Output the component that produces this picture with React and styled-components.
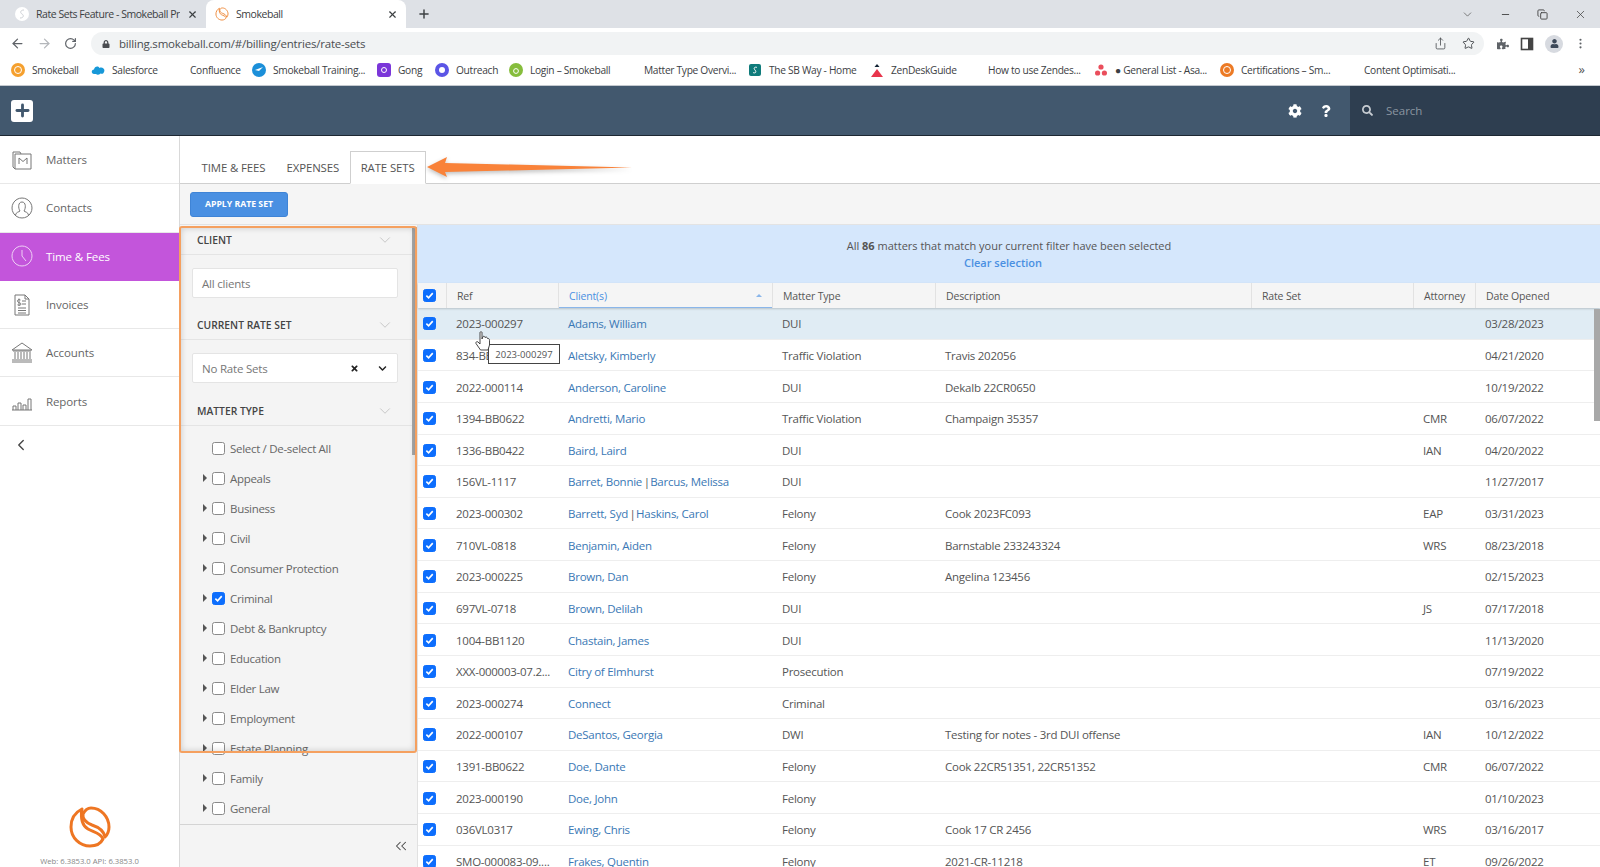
import React from 'react';
import styled, { createGlobalStyle } from 'styled-components';
import { FaCog, FaQuestion, FaSearch, FaTimes, FaChevronDown, FaLock, FaPuzzlePiece, FaUser } from 'react-icons/fa';
import { ArrowLeft, ArrowRight, RotateCw, Plus, X, ChevronDown, Minus, Copy, Star, Share, ChevronLeft, ChevronsLeft, EllipsisVertical } from 'lucide-react';

const GlobalStyle = createGlobalStyle`
  html, body { margin: 0; padding: 0; height: 100%; overflow: hidden; background: #fff; }
  * { box-sizing: border-box; }
  body { font-family: "Open Sans", "Noto Sans", sans-serif; color: #555; }
`;

const Page = styled.div`
  position: relative;
  width: 1600px;
  height: 867px;
  overflow: hidden;
  display: flex;
  flex-direction: column;
`;

/* browser chrome */
const TabStrip = styled.div`
  height: 28px;
  flex: none;
  background: #dee1e6;
  display: flex;
  align-items: flex-end;
  padding-left: 8px;
  color: #3c4043;
`;
const BrowserTab = styled.div`
  width: ${p => p.$w}px;
  height: 28px;
  display: flex;
  align-items: center;
  gap: 7px;
  padding: 0 8px 0 ${p => (p.$active ? 9 : 7)}px;
  font-size: 10.5px;
  letter-spacing: -0.45px;
  white-space: nowrap;
  background: ${p => (p.$active ? '#fff' : 'transparent')};
  border-radius: 8px 8px 0 0;
`;
const TabTitle = styled.span`
  flex: 1;
  overflow: hidden;
`;
const NewTab = styled.div`
  margin-left: 11px;
  height: 28px;
  display: flex;
  align-items: center;
`;
const WindowControls = styled.div`
  margin-left: auto;
  height: 28px;
  display: flex;
  align-items: center;
  gap: 26px;
  padding-right: 13px;
  color: #444;
`;
const AddressRow = styled.div`
  height: 28px;
  flex: none;
  background: #fff;
  display: flex;
  align-items: center;
  padding: 3px 12px 0 10px;
  color: #5f6368;
`;
const NavIcons = styled.div`
  width: 81px;
  display: flex;
  align-items: center;
  gap: 12px;
`;
const Omnibox = styled.div`
  width: 1393px;
  height: 23px;
  background: #f1f3f4;
  border-radius: 12px;
  display: flex;
  align-items: center;
  padding: 0 9px 0 11px;
  gap: 9px;
  font-size: 11.5px;
  letter-spacing: -0.2px;
  color: #4a4d51;
`;
const Url = styled.span`
  flex: 1;
`;
const FavStar = styled(Star)`
  margin-left: 6px;
`;
const ToolIcons = styled.div`
  display: flex;
  align-items: center;
  margin-left: 13px;
  gap: 11px;
`;
const Avatar = styled.div`
  width: 18px;
  height: 18px;
  border-radius: 50%;
  background: #d7dae0;
  display: flex;
  align-items: center;
  justify-content: center;
  color: #3c4858;
`;
const BookmarkBar = styled.div`
  height: 30px;
  flex: none;
  background: #fff;
  border-bottom: 1px solid #c4c9cf;
  display: flex;
  align-items: center;
  padding: 0 0 2px 11px;
  gap: 13px;
  font-size: 10.2px;
  letter-spacing: -0.3px;
  color: #3c4043;
`;
const Bookmark = styled.div`
  width: ${p => p.$w}px;
  display: flex;
  align-items: center;
  gap: 7px;
  white-space: nowrap;
  flex: none;
`;
const BookmarkIcon = styled.span`
  width: 14px;
  height: 14px;
  flex: none;
  display: block;
`;
const MoreBookmarks = styled.div`
  position: absolute;
  right: 15px;
  top: 60px;
  font-size: 13px;
  color: #555;
`;

/* app header */
const Header = styled.header`
  height: 50px;
  flex: none;
  background: #42586e;
  border-bottom: 1px solid #1d2732;
  display: flex;
  align-items: center;
  padding-left: 11px;
`;
const AddButton = styled.div`
  width: 22px;
  height: 22px;
  background: #fff;
  border-radius: 3px;
  color: #42586e;
  display: flex;
  align-items: center;
  justify-content: center;
`;
const HeaderActions = styled.div`
  margin-left: auto;
  width: 62px;
  display: flex;
  align-items: center;
  gap: 18px;
  color: #fff;
`;
const SearchBox = styled.div`
  width: 250px;
  height: 49px;
  background: #2e3e50;
  display: flex;
  align-items: center;
  gap: 11px;
  padding: 0 0 0 12px;
  color: #c7ccd2;
  font-size: 11.5px;
  span { color: #8b95a0; margin-left: 2px; }
`;

/* main */
const Main = styled.div`
  flex: 1;
  display: flex;
  min-height: 0;
`;
const Sidebar = styled.nav`
  width: 180px;
  flex: none;
  background: #fff;
  border-right: 1px solid #d9d9d9;
  display: flex;
  flex-direction: column;
`;
const NavItem = styled.div`
  height: 48.3px;
  flex: none;
  display: flex;
  align-items: center;
  gap: 13px;
  padding-left: 11px;
  font-size: 11.5px;
  letter-spacing: -0.1px;
  color: ${p => (p.$active ? '#fff' : '#666')};
  background: ${p => (p.$active ? '#c355db' : '#fff')};
  border-bottom: 1px solid ${p => (p.$active ? '#c355db' : '#e8e8e8')};
`;
const NavIcon = styled.svg`
  width: 22px;
  height: 22px;
  flex: none;
  fill: none;
  stroke: ${p => (p.$active ? '#eed0f5' : '#777')};
  stroke-width: 1;
`;
const CollapseNav = styled.div`
  height: 38px;
  flex: none;
  display: flex;
  align-items: center;
  padding-left: 12px;
  color: #444;
`;
const SideFooter = styled.div`
  margin-top: auto;
  display: flex;
  flex-direction: column;
  align-items: center;
  gap: 7px;
  height: 62px;
  font-size: 7.7px;
  color: #888;
  white-space: nowrap;
`;

const Content = styled.div`
  flex: 1;
  min-width: 0;
  display: flex;
  flex-direction: column;
  background: #f5f5f5;
`;
const TabsRow = styled.div`
  height: 48px;
  flex: none;
  background: #fff;
  border-bottom: 1px solid #cfcfcf;
  display: flex;
  align-items: flex-end;
  padding-left: 11px;
  font-size: 11.4px;
  letter-spacing: -0.1px;
  color: #555;
`;
const MainTab = styled.div`
  height: 32px;
  padding: 0 10.5px;
  display: flex;
  align-items: center;
  ${p => p.$active && `
    background: #fff;
    border: 1px solid #cfcfcf;
    border-bottom: 1px solid #fff;
    margin-bottom: -1px;
    height: 33px;
    padding: 0 10px;
  `}
`;
const Toolbar = styled.div`
  height: 41px;
  flex: none;
  padding-left: 10px;
  display: flex;
  align-items: center;
  border-bottom: 1px solid #e3e3e3;
`;
const PrimaryButton = styled.button`
  width: 98px;
  height: 25px;
  border: 1px solid #3f84d6;
  border-radius: 3px;
  background: #4a90e2;
  color: #fff;
  font: 700 8.7px "Open Sans", sans-serif;
  padding: 0;
`;
const Body = styled.div`
  flex: 1;
  display: flex;
  min-height: 0;
`;

/* filter panel */
const FilterPanel = styled.aside`
  position: relative;
  width: 238px;
  flex: none;
  background: #f4f4f4;
  border-right: 1px solid #e1e1e1;
  display: flex;
  flex-direction: column;
`;
const PanelThumb = styled.div`
  position: absolute;
  top: 2px;
  right: 0;
  width: 5px;
  height: 228px;
  background: #a8a8a8;
`;
const SectionHeader = styled.div`
  height: 30px;
  flex: none;
  display: flex;
  align-items: center;
  justify-content: space-between;
  padding: 0 23px 0 17px;
  border-bottom: 1px solid #e4e4e4;
  font-size: 10.3px;
  font-weight: 600;
  color: #444;
`;
const Field = styled.div`
  height: 30px;
  flex: none;
  margin: ${p => p.$m};
  background: #fff;
  border: 1px solid #e4e4e4;
  border-radius: 2px;
  display: flex;
  align-items: center;
  padding: 0 10px 0 9px;
  font-size: 11.5px;
  letter-spacing: -0.2px;
  color: #777;
`;
const FieldIcons = styled.span`
  margin-left: auto;
  display: flex;
  align-items: center;
  gap: 19px;
  color: #222;
`;
const TypeList = styled.div`
  flex: 1;
  min-height: 0;
  overflow: hidden;
  padding-top: 7px;
`;
const TypeItem = styled.div`
  height: 30px;
  display: flex;
  align-items: center;
  padding-left: ${p => (p.$caret ? '23px' : '32px')};
  font-size: 11.5px;
  letter-spacing: -0.3px;
  color: #666;
`;
const Caret = styled.span`
  width: 0;
  height: 0;
  margin-right: 5px;
  border-left: 4px solid #555;
  border-top: 4px solid transparent;
  border-bottom: 4px solid transparent;
`;
const TypeLabel = styled.span`
  margin-left: 5px;
`;
const PanelFooter = styled.div`
  height: 43px;
  flex: none;
  border-top: 1px solid #d4d4d4;
  display: flex;
  align-items: center;
  justify-content: flex-end;
  padding-right: 7px;
  color: #444;
`;

/* checkbox */
const Box = styled.span`
  width: 13px;
  height: 13px;
  flex: none;
  display: inline-flex;
  align-items: center;
  justify-content: center;
  border-radius: 2.5px;
  background: ${p => (p.$on ? '#0d6efd' : '#fff')};
  border: 1px solid ${p => (p.$on ? '#0d6efd' : '#8a8a8a')};
`;
const Checkbox = ({ on }) => (
  <Box $on={on}>
    {on && (
      <svg width="9" height="9" viewBox="0 0 10 10">
        <path d="M1.5 5.2 L4 7.6 L8.6 2.4" fill="none" stroke="#fff" strokeWidth="1.8" />
      </svg>
    )}
  </Box>
);

/* table */
const TablePane = styled.section`
  position: relative;
  flex: 1;
  min-width: 0;
  display: flex;
  flex-direction: column;
  background: #fff;
`;
const Banner = styled.div`
  height: 58px;
  flex: none;
  background: #d5e7fc;
  display: flex;
  flex-direction: column;
  align-items: center;
  justify-content: center;
  gap: 2px;
  font-size: 11px;
  line-height: 15px;
  color: #555;
  b { font-weight: 700; }
`;
const ClearLink = styled.a`
  color: #4a90e2;
  font-weight: 600;
  margin-right: 12px;
`;
const columns = '28px 112px 214px 163px 316px 162px 62px 1fr';
const HeadRow = styled.div`
  height: 25px;
  flex: none;
  display: grid;
  grid-template-columns: ${columns};
  background: #f5f5f5;
  box-shadow: 0 1px 2px rgba(0, 0, 0, 0.18);
  position: relative;
  font-size: 10.5px;
  letter-spacing: -0.15px;
  color: #555;
`;
const HeadCell = styled.div`
  display: flex;
  align-items: center;
  justify-content: space-between;
  padding: 0 10px;
  border-left: 1px solid #e2e2e2;
  color: ${p => (p.$sorted ? '#4a90e2' : '#555')};
  ${p => p.$sorted && 'box-shadow: inset 0 -1px 0 #8ab6ea;'}
`;
const SortMark = styled.span`
  width: 0;
  height: 0;
  border-left: 3px solid transparent;
  border-right: 3px solid transparent;
  border-bottom: 3px solid #8ab6ea;
`;
const CheckCell = styled.div`
  display: flex;
  align-items: center;
  justify-content: center;
  padding: ${p => (p.$row ? '1px' : '0')} 5px 0 0;
`;
const Row = styled.div`
  height: 31.63px;
  flex: none;
  display: grid;
  grid-template-columns: ${columns};
  align-items: center;
  border-bottom: 1px solid #eee;
  background: ${p => (p.$hover ? '#e0ecf4' : '#fff')};
  font-size: 11.5px;
  letter-spacing: -0.25px;
  color: #555;
`;
const Cell = styled.div`
  padding: 1px 10px 0;
  white-space: nowrap;
  overflow: hidden;
`;
const ClientCell = styled(Cell)`
  color: #3a78b5;
  span { color: #555; letter-spacing: -1.4px; }
`;
const TableThumb = styled.div`
  position: absolute;
  top: 84px;
  right: 0;
  width: 6px;
  height: 112px;
  background: #a8a8a8;
`;

/* annotations drawn over the page */
const Tooltip = styled.div`
  position: absolute;
  left: 488px;
  top: 344px;
  width: 72px;
  height: 20px;
  background: #fff;
  border: 1px solid #444;
  display: flex;
  align-items: center;
  justify-content: center;
  font-size: 9.5px;
  color: #555;
`;
const HandCursor = styled.svg`
  position: absolute;
  left: 475px;
  top: 331px;
  width: 15px;
  height: 20px;
`;
const OrangeFrame = styled.div`
  position: absolute;
  left: 179px;
  top: 226px;
  width: 238px;
  height: 527px;
  border: 2px solid #f5a05f;
  border-radius: 3px;
  box-shadow: inset 0 0 6px rgba(0, 0, 0, 0.18);
  pointer-events: none;
`;
const Arrow = styled.svg`
  position: absolute;
  left: 425px;
  top: 154px;
  width: 210px;
  height: 28px;
  filter: drop-shadow(0 2px 2px rgba(0, 0, 0, 0.25));
`;

const Favicon = ({ c, children }) => (
  <BookmarkIcon as="svg" viewBox="0 0 14 14">
    {c && <circle cx="7" cy="7" r="7" fill={c} />}
    {children}
  </BookmarkIcon>
);

const SMark = ({ size, color, sw }) => (
  <svg width={size} height={size} viewBox="0 0 44 44" fill="none" stroke={color} strokeWidth={sw} strokeLinejoin="round">
    <path d="M14 4 C6 8 3 15 3 22 C3 33 12 41 22 41 C28 41 33 38 35 34 C33 28 25 27 20 24 C15 21 12 16 14 4z" />
    <path d="M15 9 C17 5 19 3 23 3 C33 3 41 12 41 22 C41 26 39 30 37 32 C36 26 30 22 24 20 C19 18 14 15 15 9z" />
  </svg>
);

const bookmarks = [
  { w: 67, t: 'Smokeball', i: <Favicon c="#f5a02e"><circle cx="7" cy="7" r="3.5" fill="none" stroke="#fff" /></Favicon> },
  { w: 65, t: 'Salesforce', i: <Favicon><path d="M3 11 C0 11 0 6.5 3 6.5 C3.5 3.5 7 2.5 8.5 5 C11.5 3.5 14.5 6.5 13 9 C12.5 11 10.5 11 9.5 10.5 C8 12 6 12 5 11z" fill="#1798d8" /></Favicon> },
  { w: 70, t: 'Confluence', i: <Favicon /> },
  { w: 112, t: 'Smokeball Training...', i: <Favicon c="#1b8fd9"><path d="M3 7 L11 4 L7 8z" fill="#fff" /></Favicon> },
  { w: 45, t: 'Gong', i: <Favicon><rect width="14" height="14" rx="3" fill="#7b36d9" /><circle cx="7" cy="7" r="2.5" fill="none" stroke="#fff" /></Favicon> },
  { w: 61, t: 'Outreach', i: <Favicon c="#5b55e6"><circle cx="7" cy="7" r="3" fill="#fff" /></Favicon> },
  { w: 101, t: 'Login – Smokeball', i: <Favicon c="#86bd3c"><circle cx="7" cy="8" r="2.4" fill="none" stroke="#fff" /></Favicon> },
  { w: 112, t: 'Matter Type Overvi...', i: <Favicon /> },
  { w: 109, t: 'The SB Way - Home', i: <Favicon><rect x="1" y="1" width="12" height="12" rx="2" fill="#0f7b7b" /><path d="M5 9.5 C7 10.5 9 9.5 7 7 C5 5 7 3.5 9 4.5" fill="none" stroke="#fff" /></Favicon> },
  { w: 84, t: 'ZenDeskGuide', i: <Favicon><path d="M7 6 L13 14 H1z" fill="#e8354c" /><path d="M7 1 L9.5 4 H4.5z" fill="#123" /></Favicon> },
  { w: 114, t: 'How to use Zendes...', i: <Favicon /> },
  { w: 113, t: '● General List - Asa...', i: <Favicon><circle cx="7" cy="4" r="2.6" fill="#ea4e5c" /><circle cx="3.6" cy="10" r="2.6" fill="#ea4e5c" /><circle cx="10.4" cy="10" r="2.6" fill="#ea4e5c" /></Favicon> },
  { w: 110, t: 'Certifications – Sm...', i: <Favicon c="#ec7a25"><circle cx="7" cy="7" r="3.5" fill="none" stroke="#fff" /></Favicon> },
  { w: 112, t: 'Content Optimisati...', i: <Favicon /> },
];

const navItems = [
  { t: 'Matters', d: 'M2 3 H9 L10 5 H20 V20 H4 L2 18z M4 20 V5 H10 M8 15 V9 L12 12.5 L16 9 V15' },
  { t: 'Contacts', d: 'M11 1 A10 10 0 1 0 11.01 1z M4.5 18 C5 15 8 15 9 14 C7 11 7 5 11 5 C15 5 15 11 13 14 C14 15 17 15 17.5 18' },
  { t: 'Time & Fees', d: 'M11 1 A10 10 0 1 0 11.01 1z M11 5 V11 L15 16', active: true },
  { t: 'Invoices', d: 'M4 1 H14 L18 5 V21 H4z M14 1 V5 H18 M7 14 H15 M7 16.5 H15 M7 19 H15 M11 7 H15 M11 10 H15 M8 4.5 V12 M9.5 6 C7.5 5 6 6 6.5 7.5 C7 9 10 8.5 10 10 C10 11.5 8 11.5 6.5 10.8' },
  { t: 'Accounts', d: 'M1 8 L11 1 L21 8z M2 9 H20 M4 10 V17 M7 10 V17 M10 10 V17 M13 10 V17 M16 10 V17 M19 10 V17 M1 18 H21 M1 20 H21' },
  { t: 'Reports', d: 'M1 20 H21 M2 20 V16 H5 V20 M7 20 V13 H10 V20 M12 20 V15 H15 V20 M17 20 V9 H20 V20' },
];

const matterTypes = ['Appeals', 'Business', 'Civil', 'Consumer Protection', 'Criminal', 'Debt & Bankruptcy', 'Education', 'Elder Law', 'Employment', 'Estate Planning', 'Family', 'General'];

const rows = [
  ['2023-000297', ['Adams, William'], 'DUI', '', '', '03/28/2023'],
  ['834-BB0420', ['Aletsky, Kimberly'], 'Traffic Violation', 'Travis 202056', '', '04/21/2020'],
  ['2022-000114', ['Anderson, Caroline'], 'DUI', 'Dekalb 22CR0650', '', '10/19/2022'],
  ['1394-BB0622', ['Andretti, Mario'], 'Traffic Violation', 'Champaign 35357', 'CMR', '06/07/2022'],
  ['1336-BB0422', ['Baird, Laird'], 'DUI', '', 'IAN', '04/20/2022'],
  ['156VL-1117', ['Barret, Bonnie', 'Barcus, Melissa'], 'DUI', '', '', '11/27/2017'],
  ['2023-000302', ['Barrett, Syd', 'Haskins, Carol'], 'Felony', 'Cook 2023FC093', 'EAP', '03/31/2023'],
  ['710VL-0818', ['Benjamin, Aiden'], 'Felony', 'Barnstable 233243324', 'WRS', '08/23/2018'],
  ['2023-000225', ['Brown, Dan'], 'Felony', 'Angelina 123456', '', '02/15/2023'],
  ['697VL-0718', ['Brown, Delilah'], 'DUI', '', 'JS', '07/17/2018'],
  ['1004-BB1120', ['Chastain, James'], 'DUI', '', '', '11/13/2020'],
  ['XXX-000003-07.2...', ['Citry of Elmhurst'], 'Prosecution', '', '', '07/19/2022'],
  ['2023-000274', ['Connect'], 'Criminal', '', '', '03/16/2023'],
  ['2022-000107', ['DeSantos, Georgia'], 'DWI', 'Testing for notes - 3rd DUI offense', 'IAN', '10/12/2022'],
  ['1391-BB0622', ['Doe, Dante'], 'Felony', 'Cook 22CR51351, 22CR51352', 'CMR', '06/07/2022'],
  ['2023-000190', ['Doe, John'], 'Felony', '', '', '01/10/2023'],
  ['036VL0317', ['Ewing, Chris'], 'Felony', 'Cook 17 CR 2456', 'WRS', '03/16/2017'],
  ['SMO-000083-09....', ['Frakes, Quentin'], 'Felony', '2021-CR-11218', 'ET', '09/26/2022'],
];

const App = () => (
  <Page>
    <GlobalStyle />
    <TabStrip>
      <BrowserTab $w={198}>
        <svg width="14" height="14" viewBox="0 0 14 14"><circle cx="7" cy="7" r="7" fill="#fff" /><path d="M9 3 C5 3 5 6 7 7 C9 8 9 11 5 11" fill="none" stroke="#cfd2d6" /></svg>
        <TabTitle>Rate Sets Feature - Smokeball Pr</TabTitle>
        <X size={11} strokeWidth={2.5} />
      </BrowserTab>
      <BrowserTab $w={200} $active>
        <SMark size={14} color="#ee8a3c" sw={3} />
        <TabTitle>Smokeball</TabTitle>
        <X size={11} strokeWidth={2.5} />
      </BrowserTab>
      <NewTab><Plus size={14} strokeWidth={2.5} /></NewTab>
      <WindowControls>
        <ChevronDown size={13} strokeWidth={1.2} />
        <Minus size={11} />
        <Copy size={11} />
        <X size={13} strokeWidth={1.4} />
      </WindowControls>
    </TabStrip>
    <AddressRow>
      <NavIcons>
        <ArrowLeft size={15} strokeWidth={2} />
        <ArrowRight size={15} strokeWidth={2} color="#b4b7bb" />
        <RotateCw size={13} strokeWidth={2.2} />
      </NavIcons>
      <Omnibox>
        <FaLock size={8} />
        <Url>billing.smokeball.com/#/billing/entries/rate-sets</Url>
        <Share size={13} strokeWidth={1.5} />
        <FavStar size={13} strokeWidth={1.8} />
      </Omnibox>
      <ToolIcons>
        <FaPuzzlePiece size={12} />
        <svg width="14" height="14" viewBox="0 0 14 14"><rect x="1.5" y="1.5" width="11" height="11" fill="none" stroke="#444" strokeWidth="1.6" /><rect x="8" y="1.5" width="4.5" height="11" fill="#444" /></svg>
        <Avatar><FaUser size={9} /></Avatar>
        <EllipsisVertical size={13} />
      </ToolIcons>
    </AddressRow>
    <BookmarkBar>
      {bookmarks.map(b => (
        <Bookmark key={b.t} $w={b.w}>{b.i}{b.t}</Bookmark>
      ))}
    </BookmarkBar>
    <MoreBookmarks>»</MoreBookmarks>
    <Header>
      <AddButton><Plus size={19} strokeWidth={3.6} /></AddButton>
      <HeaderActions>
        <FaCog size={14} />
        <FaQuestion size={12} />
      </HeaderActions>
      <SearchBox><FaSearch size={11} /><span>Search</span></SearchBox>
    </Header>
    <Main>
      <Sidebar>
        {navItems.map(n => (
          <NavItem key={n.t} $active={n.active}>
            <NavIcon viewBox="0 0 22 22" $active={n.active}><path d={n.d} /></NavIcon>
            {n.t}
          </NavItem>
        ))}
        <CollapseNav><ChevronLeft size={18} strokeWidth={1.8} /></CollapseNav>
        <SideFooter>
          <SMark size={44} color="#ee7623" sw={3} />
          Web: 6.3853.0 API: 6.3853.0
        </SideFooter>
      </Sidebar>
      <Content>
        <TabsRow>
          <MainTab>TIME &amp; FEES</MainTab>
          <MainTab>EXPENSES</MainTab>
          <MainTab $active>RATE SETS</MainTab>
        </TabsRow>
        <Toolbar><PrimaryButton>APPLY RATE SET</PrimaryButton></Toolbar>
        <Body>
          <FilterPanel>
            <SectionHeader>CLIENT<ChevronDown size={18} strokeWidth={0.8} color="#aaa" /></SectionHeader>
            <Field $m="13px 19px 12px 12px">All clients</Field>
            <SectionHeader>CURRENT RATE SET<ChevronDown size={18} strokeWidth={0.8} color="#aaa" /></SectionHeader>
            <Field $m="13px 19px 13px 12px">
              No Rate Sets
              <FieldIcons><FaTimes size={9} /><FaChevronDown size={9} /></FieldIcons>
            </Field>
            <SectionHeader>MATTER TYPE<ChevronDown size={18} strokeWidth={0.8} color="#aaa" /></SectionHeader>
            <TypeList>
              <TypeItem>
                <Checkbox />
                <TypeLabel>Select / De-select All</TypeLabel>
              </TypeItem>
              {matterTypes.map(t => (
                <TypeItem key={t} $caret>
                  <Caret />
                  <Checkbox on={t === 'Criminal'} />
                  <TypeLabel>{t}</TypeLabel>
                </TypeItem>
              ))}
            </TypeList>
            <PanelFooter><ChevronsLeft size={18} strokeWidth={1.4} /></PanelFooter>
            <PanelThumb />
          </FilterPanel>
          <TablePane>
            <Banner>
              <div>All <b>86</b> matters that match your current filter have been selected</div>
              <ClearLink>Clear selection</ClearLink>
            </Banner>
            <HeadRow>
              <CheckCell><Checkbox on /></CheckCell>
              <HeadCell>Ref</HeadCell>
              <HeadCell $sorted>Client(s)<SortMark /></HeadCell>
              <HeadCell>Matter Type</HeadCell>
              <HeadCell>Description</HeadCell>
              <HeadCell>Rate Set</HeadCell>
              <HeadCell>Attorney</HeadCell>
              <HeadCell>Date Opened</HeadCell>
            </HeadRow>
            {rows.map((r, i) => (
              <Row key={r[0]} $hover={i === 0}>
                <CheckCell $row><Checkbox on /></CheckCell>
                <Cell>{r[0]}</Cell>
                <ClientCell>
                  {r[1][0]}
                  {r[1][1] && <><span> | </span>{r[1][1]}</>}
                </ClientCell>
                <Cell>{r[2]}</Cell>
                <Cell>{r[3]}</Cell>
                <Cell />
                <Cell>{r[4]}</Cell>
                <Cell>{r[5]}</Cell>
              </Row>
            ))}
            <TableThumb />
          </TablePane>
        </Body>
      </Content>
    </Main>

    <Tooltip>2023-000297</Tooltip>
    <HandCursor viewBox="0 0 15 20">
      <path d="M5 1.5 C5 .5 7 .5 7 1.5 V8 L8 5.5 C9 5 10 5.5 10 6.5 L11 6 C12 6 12.5 7 12.5 7.5 L13.5 7.5 C14.5 8 14.5 9 14.5 10 V14 L13 19 H5.5 L1 12.5 C.5 11 2 10 3 11 L5 13z" fill="#fff" stroke="#333" strokeWidth="0.9" />
    </HandCursor>
    <OrangeFrame />
    <Arrow viewBox="0 0 210 28">
      <path d="M2 13 L22 3 L20 9 L207 13.5 L20 18 L22 23z" fill="#f98239" />
    </Arrow>
  </Page>
);

export default App;
